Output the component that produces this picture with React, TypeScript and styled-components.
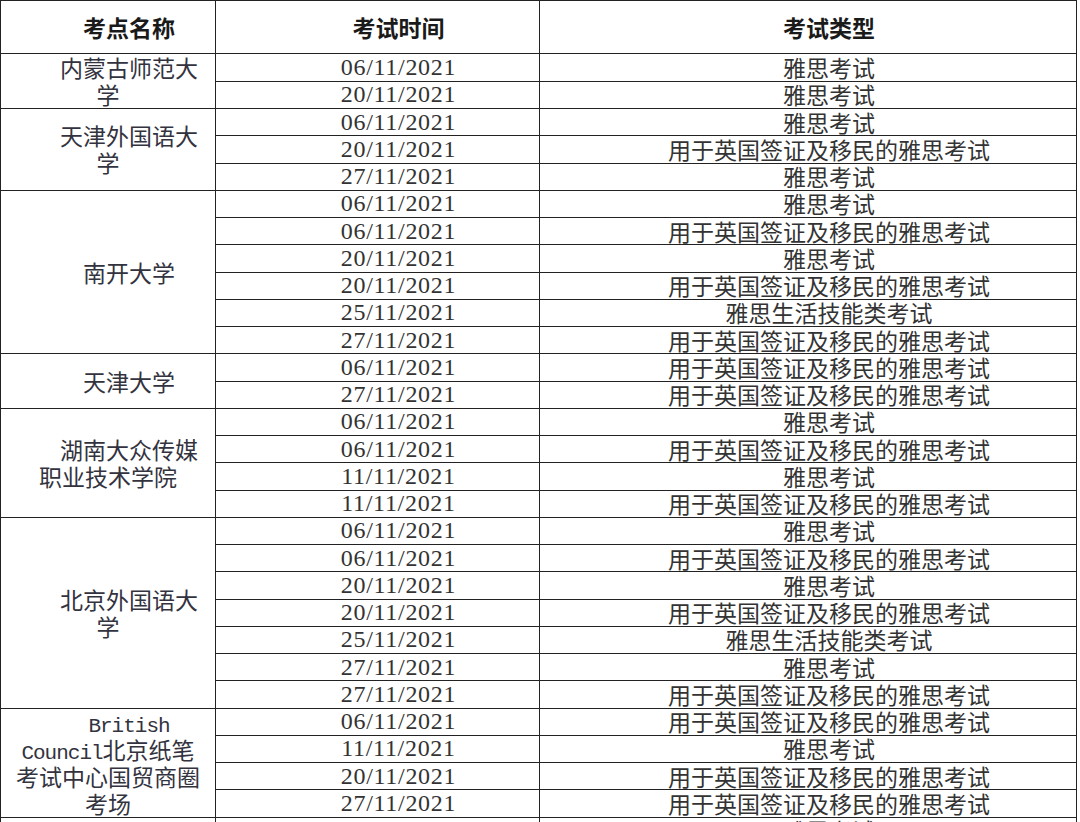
import styled, { createGlobalStyle } from "styled-components";

const UKVI = "用于英国签证及移民的雅思考试";
const IELTS = "雅思考试";
const LIFE = "雅思生活技能类考试";

type Session = { date: string; type: string };
type Site = { name: string; latin?: string; sessions: Session[] };

const sites: Site[] = [
    {
        name: "内蒙古师范大学",
        sessions: [
            { date: "06/11/2021", type: IELTS },
            { date: "20/11/2021", type: IELTS },
        ],
    },
    {
        name: "天津外国语大学",
        sessions: [
            { date: "06/11/2021", type: IELTS },
            { date: "20/11/2021", type: UKVI },
            { date: "27/11/2021", type: IELTS },
        ],
    },
    {
        name: "南开大学",
        sessions: [
            { date: "06/11/2021", type: IELTS },
            { date: "06/11/2021", type: UKVI },
            { date: "20/11/2021", type: IELTS },
            { date: "20/11/2021", type: UKVI },
            { date: "25/11/2021", type: LIFE },
            { date: "27/11/2021", type: UKVI },
        ],
    },
    {
        name: "天津大学",
        sessions: [
            { date: "06/11/2021", type: UKVI },
            { date: "27/11/2021", type: UKVI },
        ],
    },
    {
        name: "湖南大众传媒职业技术学院",
        sessions: [
            { date: "06/11/2021", type: IELTS },
            { date: "06/11/2021", type: UKVI },
            { date: "11/11/2021", type: IELTS },
            { date: "11/11/2021", type: UKVI },
        ],
    },
    {
        name: "北京外国语大学",
        sessions: [
            { date: "06/11/2021", type: IELTS },
            { date: "06/11/2021", type: UKVI },
            { date: "20/11/2021", type: IELTS },
            { date: "20/11/2021", type: UKVI },
            { date: "25/11/2021", type: LIFE },
            { date: "27/11/2021", type: IELTS },
            { date: "27/11/2021", type: UKVI },
        ],
    },
    {
        latin: "British Council",
        name: "北京纸笔考试中心国贸商圈考场",
        sessions: [
            { date: "06/11/2021", type: UKVI },
            { date: "11/11/2021", type: IELTS },
            { date: "20/11/2021", type: UKVI },
            { date: "27/11/2021", type: UKVI },
        ],
    },
    {
        name: "",
        sessions: [{ date: "06/11/2021", type: IELTS }],
    },
];

const GlobalStyle = createGlobalStyle`
    html, body {
        margin: 0;
        padding: 0;
        overflow: hidden;
        background: #fff;
    }
`;

const Table = styled.table`
    border-collapse: collapse;
    table-layout: fixed;
    width: 1076px;
    font-family: "Liberation Serif", "Noto Sans CJK SC", serif;
    color: #333;

    th,
    td {
        border: 1px solid #222;
        padding: 0;
        text-align: center;
        text-indent: 42px;
        line-height: 25px;
        white-space: nowrap;
    }
`;

const HeadRow = styled.tr`
    height: 53px;
`;

const HeadCell = styled.th`
    font-family: "Noto Sans CJK SC", serif;
    font-size: 23px;
    font-weight: bold;
    color: #1a1a1a;
`;

const Row = styled.tr`
    height: 27.25px;
`;

const SiteCell = styled.td`
    && {
        white-space: normal;
        padding: 0 12px;
        vertical-align: middle;
        line-height: 27px;
    }
    font-family: "Noto Sans CJK SC", serif;
    font-size: 23px;
    color: #333340;
`;

const Latin = styled.span`
    font-family: "Liberation Mono", monospace;
    font-size: 21px;
    letter-spacing: -1px;
    line-height: 18px;
`;

const DateCell = styled.td`
    font-size: 24px;
    letter-spacing: 0.7px;
`;

const TypeCell = styled.td`
    font-family: "Noto Sans CJK SC", serif;
    font-size: 23px;
`;

export default function App() {
    return (
        <>
            <GlobalStyle />
            <Table>
                <colgroup>
                    <col style={{ width: 215 }} />
                    <col style={{ width: 324 }} />
                    <col style={{ width: 537 }} />
                </colgroup>
                <thead>
                    <HeadRow>
                        <HeadCell>考点名称</HeadCell>
                        <HeadCell>考试时间</HeadCell>
                        <HeadCell>考试类型</HeadCell>
                    </HeadRow>
                </thead>
                <tbody>
                    {sites.map((site, i) =>
                        site.sessions.map((s, j) => (
                            <Row key={`${i}-${j}`}>
                                {j === 0 && (
                                    <SiteCell rowSpan={site.sessions.length}>
                                        {site.latin && <Latin>{site.latin}</Latin>}
                                        {site.name}
                                    </SiteCell>
                                )}
                                <DateCell>{s.date}</DateCell>
                                <TypeCell>{s.type}</TypeCell>
                            </Row>
                        ))
                    )}
                </tbody>
            </Table>
        </>
    );
}
